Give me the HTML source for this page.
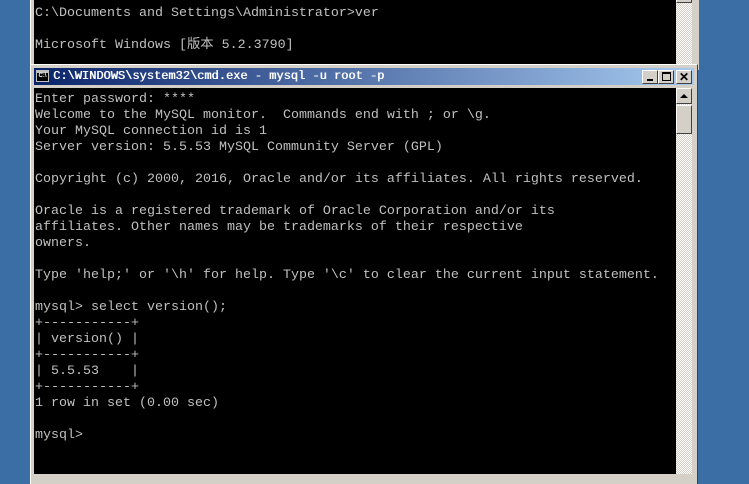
<!DOCTYPE html>
<html><head><style>
body{margin:0;width:749px;height:474px;overflow:hidden;background:#3a6ea5;position:relative;font-family:"Liberation Mono","Noto Sans CJK SC",monospace}
.abs{position:absolute}
.term{color:#c0c0c0;font-size:13.33px;line-height:16px;white-space:pre;}
.chk{background-color:#fff;background-image:linear-gradient(45deg,#d4d0c8 25%,transparent 25%,transparent 75%,#d4d0c8 75%),linear-gradient(45deg,#d4d0c8 25%,transparent 25%,transparent 75%,#d4d0c8 75%);background-size:2px 2px;background-position:0 0,1px 1px}
.btn{background:#d4d0c8;border:1px solid;border-color:#fff #404040 #404040 #fff;box-sizing:border-box}
</style></head><body>
<!-- back window -->
<div class="abs" style="left:30px;top:0;width:668px;height:70px;background:#d4d0c8;border-left:1px solid #fff;"></div>
<div class="abs" style="left:34px;top:0;width:642px;height:64px;background:#000"></div>
<div class="abs chk" style="left:676px;top:0;width:16px;height:64px"></div>
<div class="abs btn" style="left:676px;top:-14px;width:16px;height:17px"></div>
<div class="abs term" style="left:35px;top:6px;height:58px;overflow:hidden">C:\Documents and Settings\Administrator&gt;ver
</div>
<div class="abs term" style="left:35px;top:38px;height:16px;line-height:16px">Microsoft Windows [版本 5.2.3790]</div>
<!-- front window -->
<div class="abs" style="left:30px;top:64px;width:668px;height:420px;background:#d4d0c8;border-top:1px solid #fff;border-left:1px solid #fff;border-right:1px solid #404040;box-sizing:border-box"></div>
<div class="abs" style="left:34px;top:68px;width:660px;height:17px;background:linear-gradient(to right,#0a246a,#a6caf0)"></div>
<div class="abs" style="left:36px;top:70px;width:13px;height:12px;background:#000;border:1px solid #c0c0c0;box-sizing:border-box;border-top:3px solid #c0c0c0;color:#fff;font:bold 6px 'Liberation Sans',sans-serif;line-height:7px;text-align:center">C:\</div>
<div class="abs" style="left:53px;top:68px;color:#fff;font:12px 'Liberation Mono',monospace;line-height:17px;white-space:pre;text-shadow:0.5px 0 #fff">C:\WINDOWS\system32\cmd.exe - mysql -u root -p</div>
<div class="abs btn" style="left:642px;top:70px;width:16px;height:14px"><div class="abs" style="left:4px;top:8px;width:6px;height:2px;background:#000"></div></div>
<div class="abs btn" style="left:658px;top:70px;width:16px;height:14px"><div class="abs" style="left:3px;top:1px;width:9px;height:9px;border:1px solid #000;border-top-width:2px;box-sizing:border-box"></div></div>
<div class="abs btn" style="left:676px;top:70px;width:16px;height:14px;font:bold 12px 'Liberation Sans',sans-serif;line-height:12px;text-align:center">✕</div>
<div class="abs" style="left:34px;top:88px;width:642px;height:386px;background:#000"></div>
<div class="abs chk" style="left:676px;top:88px;width:16px;height:386px"></div>
<div class="abs btn" style="left:676px;top:88px;width:16px;height:16px"><div class="abs" style="left:3px;top:5px;width:0;height:0;border-left:4px solid transparent;border-right:4px solid transparent;border-bottom:4px solid #000"></div></div>
<div class="abs btn" style="left:676px;top:105px;width:16px;height:29px"></div>
<div class="abs term" style="left:35px;top:92px">Enter password: ****
Welcome to the MySQL monitor.  Commands end with ; or \g.
Your MySQL connection id is 1
Server version: 5.5.53 MySQL Community Server (GPL)

Copyright (c) 2000, 2016, Oracle and/or its affiliates. All rights reserved.

Oracle is a registered trademark of Oracle Corporation and/or its
affiliates. Other names may be trademarks of their respective
owners.

Type 'help;' or '\h' for help. Type '\c' to clear the current input statement.

mysql&gt; select version();
+-----------+
| version() |
+-----------+
| 5.5.53    |
+-----------+
1 row in set (0.00 sec)

mysql&gt;</div>
</body></html>
